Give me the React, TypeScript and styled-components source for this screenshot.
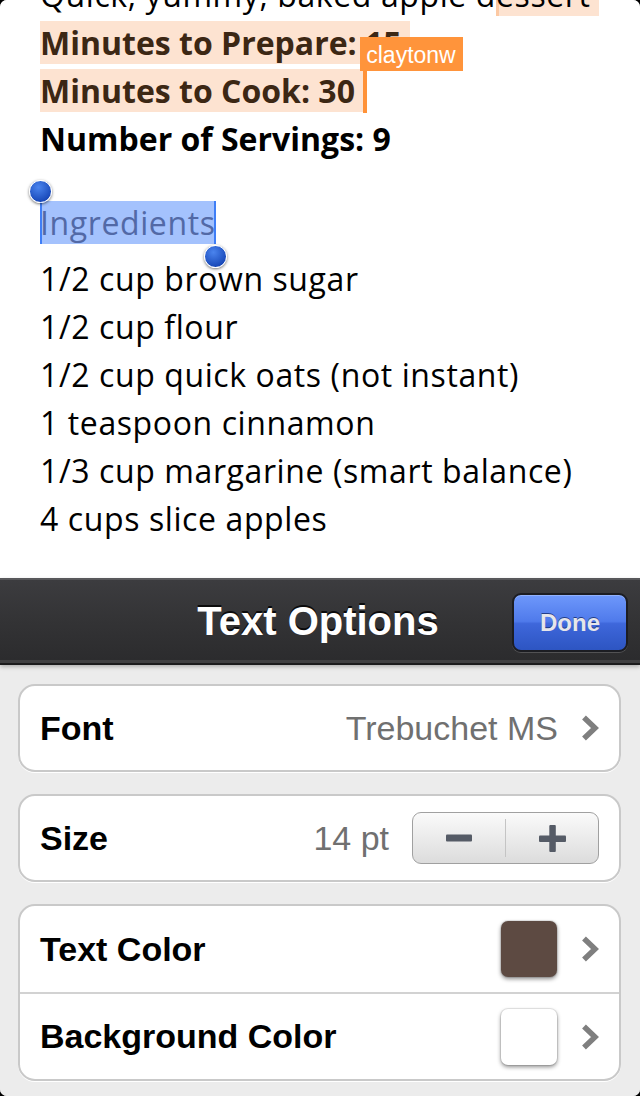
import React from "react";
import styled, { createGlobalStyle } from "styled-components";

const Global = createGlobalStyle`
  html, body { margin: 0; padding: 0; background: #000; }
  #root { width: 640px; }
  * { box-sizing: border-box; }
`;

const Screen = styled.div`
  width: 640px;
  height: 1096px;
  overflow: hidden;
  border-radius: 7px;
  background: #ececec;
  display: flex;
  flex-direction: column;
`;

const Doc = styled.div`
  height: 578px;
  flex: none;
  background: #fff;
  overflow: hidden;
  padding: 0 0 0 40px;
  font-family: "Open Sans", "DejaVu Sans", sans-serif;
  font-size: 32px;
  line-height: 48px;
  color: #000;
`;

const Flow = styled.div`
  margin-top: -29px;
`;

const Para = styled.div<{ $bold?: boolean }>`
  font-weight: ${(p) => (p.$bold ? 700 : 400)};
  letter-spacing: ${(p) => (p.$bold ? "0" : "0.6px")};
  white-space: pre;
`;

const Hl = styled.span<{ $edge?: boolean }>`
  background: #fde3d1;
  color: #3c2714;
  ${(p) => (p.$edge ? "box-shadow: inset 3px 0 0 #fcc9a3; color: #000;" : "")}
`;

const Caret = styled.span`
  display: inline-block;
  position: relative;
  width: 4px;
  height: 42px;
  background: #ff9238;
  vertical-align: -10px;
`;

const Tag = styled.span`
  position: absolute;
  left: -3px;
  bottom: 100%;
  height: 34px;
  padding: 0 7px 0 6px;
  background: #ff943b;
  color: #fff;
  font-family: "Liberation Sans", Arial, sans-serif;
  font-weight: 400;
  font-size: 23px;
  letter-spacing: 0;
  line-height: 37px;
  white-space: nowrap;
`;

const Heading = styled.div`
  margin: 36px 0 8px;
  letter-spacing: 0.6px;
`;

const Sel = styled.span`
  position: relative;
  background: #a4c2fd;
  color: #5269a6;
  box-shadow: inset 2px 0 0 #3f7ef6, inset -2px 0 0 #3f7ef6;
`;

const Knob = styled.span<{ $end?: boolean }>`
  position: absolute;
  width: 23px;
  height: 23px;
  border-radius: 50%;
  background: radial-gradient(circle at 40% 30%, #4a84ee, #1848b8 75%);
  border: 1.5px solid #fff;
  box-shadow: 0 1px 3px rgba(0, 0, 0, 0.55);
  ${(p) =>
    p.$end
      ? "right: -11px; bottom: -24px;"
      : "left: -11px; top: -21px;"}
`;

const Toolbar = styled.div`
  position: relative;
  height: 87px;
  flex: none;
  display: flex;
  align-items: center;
  justify-content: center;
  background: linear-gradient(#3c3c3f 0%, #333335 50%, #2b2b2d 100%);
  border-top: 2px solid #58585b;
  border-bottom: 2px solid #1b1b1c;
  box-shadow: 0 2px 4px rgba(0, 0, 0, 0.25), inset 0 -3px 0 #3f3f41;
  z-index: 1;
`;

const Title = styled.h1`
  margin: 0;
  font-family: "Liberation Sans", Arial, sans-serif;
  font-weight: 700;
  font-size: 40px;
  color: #fff;
  text-shadow: 0 -2px 0 rgba(0, 0, 0, 0.8);
  transform: translateX(-2px);
`;

const DoneButton = styled.button`
  position: absolute;
  right: 12px;
  top: 13px;
  width: 116px;
  height: 59px;
  border-radius: 9px;
  border: 2px solid #1c1d22;
  background: linear-gradient(#6e98fb 0%, #4f7aeb 48%, #3e67db 52%, #2d55c2 100%);
  box-shadow: 0 1px 0 rgba(255, 255, 255, 0.18), inset 0 1px 0 rgba(255, 255, 255, 0.25);
  color: #e6e6ea;
  font-family: "Liberation Sans", Arial, sans-serif;
  font-weight: 700;
  font-size: 24px;
  text-shadow: 0 -1px 0 rgba(10, 30, 90, 0.7);
  padding: 0;
`;

const Panel = styled.div`
  flex: 1;
  display: flex;
  flex-direction: column;
  gap: 22px;
  padding: 19px 19px 0 18px;
  background: #ececec;
`;

const Card = styled.div`
  background: #fff;
  border: 2px solid #c9c9c9;
  border-radius: 17px;
  box-shadow: 0 1px 0 #fff;
  display: flex;
  flex-direction: column;
  overflow: hidden;
`;

const Row = styled.div<{ $sep?: boolean; $h?: number }>`
  height: ${(p) => p.$h ?? 84}px;
  display: flex;
  align-items: center;
  padding: 0 20px 0 20px;
  ${(p) => (p.$sep ? "border-top: 2px solid #d2d2d2;" : "")}
  font-family: "Liberation Sans", Arial, sans-serif;
  font-size: 34px;
`;

const Label = styled.span`
  font-weight: 700;
  color: #000;
  flex: 1;
`;

const Value = styled.span`
  color: #707070;
  margin-right: 23px;
`;

const Swatch = styled.span<{ $color: string }>`
  width: 56px;
  height: 56px;
  border-radius: 7px;
  background: ${(p) => p.$color};
  box-shadow: 0 2px 4px rgba(0, 0, 0, 0.45), 0 0 0 1px rgba(0, 0, 0, 0.08);
  margin-right: 24px;
`;

const Stepper = styled.div`
  width: 187px;
  height: 52px;
  border: 1.5px solid #a0a0a0;
  border-radius: 9px;
  background: linear-gradient(#fafafa, #dcdcdc);
  display: flex;
  align-items: stretch;
  box-shadow: 0 1px 0 #fff;
`;

const Seg = styled.div<{ $divider?: boolean }>`
  flex: 1;
  display: flex;
  align-items: center;
  justify-content: center;
  ${(p) => (p.$divider ? "border-left: 1.5px solid #c4c4c4; margin: 6px 0; " : "")}
`;

const Chevron = () => (
  <svg width="18" height="26" viewBox="0 0 18 26">
    <path d="M3 2.5 L14 13 L3 23.5" fill="none" stroke="#7f7f7f" strokeWidth="5.5" strokeLinejoin="miter" />
  </svg>
);

const Minus = () => (
  <svg width="26" height="8" viewBox="0 0 26 8">
    <rect x="0" y="0.5" width="26" height="7" rx="1" fill="#555b66" />
  </svg>
);

const Plus = () => (
  <svg width="27" height="27" viewBox="0 0 27 27">
    <rect x="0" y="10.5" width="27" height="6.5" rx="1" fill="#555b66" />
    <rect x="10.3" y="0" width="6.5" height="27" rx="1" fill="#555b66" />
  </svg>
);

const ingredients = [
  "1/2 cup brown sugar",
  "1/2 cup flour",
  "1/2 cup quick oats (not instant)",
  "1 teaspoon cinnamon",
  "1/3 cup margarine (smart balance)",
  "4 cups slice apples",
];

export default function App() {
  return (
    <>
      <Global />
      <Screen>
        <Doc>
          <Flow>
            <Para>
              Quick, yummy, baked apple d<Hl $edge>essert </Hl>
            </Para>
            <Para $bold>
              <Hl>Minutes to Prepare: 15 </Hl>
            </Para>
            <Para $bold>
              <Hl>Minutes to Cook: 30 </Hl>
              <Caret>
                <Tag>claytonw</Tag>
              </Caret>
            </Para>
            <Para $bold>Number of Servings: 9</Para>
            <Heading>
              <Sel>
                Ingredients
                <Knob />
                <Knob $end />
              </Sel>
            </Heading>
            {ingredients.map((t) => (
              <Para key={t}>{t}</Para>
            ))}
          </Flow>
        </Doc>
        <Toolbar>
          <Title>Text Options</Title>
          <DoneButton>Done</DoneButton>
        </Toolbar>
        <Panel>
          <Card>
            <Row>
              <Label>Font</Label>
              <Value>Trebuchet MS</Value>
              <Chevron />
            </Row>
          </Card>
          <Card>
            <Row>
              <Label>Size</Label>
              <Value>14 pt</Value>
              <Stepper>
                <Seg>
                  <Minus />
                </Seg>
                <Seg $divider>
                  <Plus />
                </Seg>
              </Stepper>
            </Row>
          </Card>
          <Card>
            <Row $h={86}>
              <Label>Text Color</Label>
              <Swatch $color="#5d4a42" />
              <Chevron />
            </Row>
            <Row $sep $h={87}>
              <Label>Background Color</Label>
              <Swatch $color="#ffffff" />
              <Chevron />
            </Row>
          </Card>
        </Panel>
      </Screen>
    </>
  );
}
